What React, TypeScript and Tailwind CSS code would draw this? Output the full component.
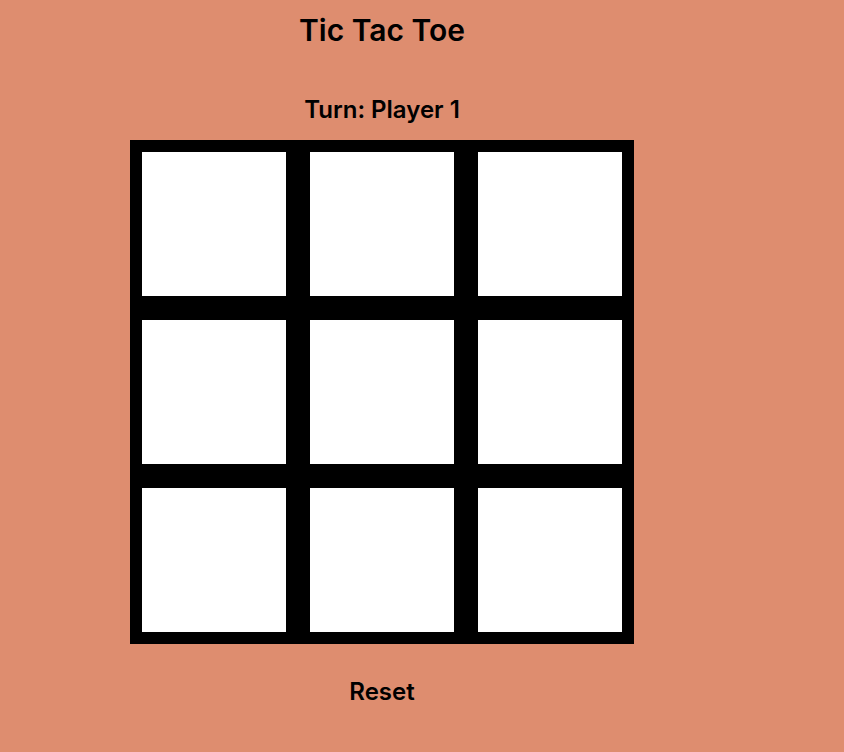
import React, { useState } from 'react';

const App: React.FC = () => {
    const [cells, setCells] = useState<(string | null)[]>(Array(9).fill(null));
    const [player, setPlayer] = useState(1);

    const play = (i: number) => {
        if (cells[i]) return;
        const next = [...cells];
        next[i] = player === 1 ? 'X' : 'O';
        setCells(next);
        setPlayer(player === 1 ? 2 : 1);
    };

    const reset = () => {
        setCells(Array(9).fill(null));
        setPlayer(1);
    };

    return (
        <div className="min-h-screen bg-[#de8d6f] text-black" style={{ fontFamily: 'Inter, sans-serif' }}>
            <div className="w-[764px] flex flex-col items-center">
                <h1 className="mt-[12px] text-[30px] leading-[36px] font-semibold">Tic Tac Toe</h1>
                <div className="mt-[48px] text-[24px] leading-[28px] font-semibold">Turn: Player {player}</div>
                <div className="mt-[16px] grid grid-cols-3 gap-6 bg-black p-3">
                    {cells.map((c, i) => (
                        <button
                            key={i}
                            onClick={() => play(i)}
                            className="w-[144px] h-[144px] bg-white text-6xl font-bold"
                        >
                            {c}
                        </button>
                    ))}
                </div>
                <button onClick={reset} className="mt-[35px] text-[24px] leading-[26px] font-semibold">
                    Reset
                </button>
            </div>
        </div>
    );
};

export default App;
